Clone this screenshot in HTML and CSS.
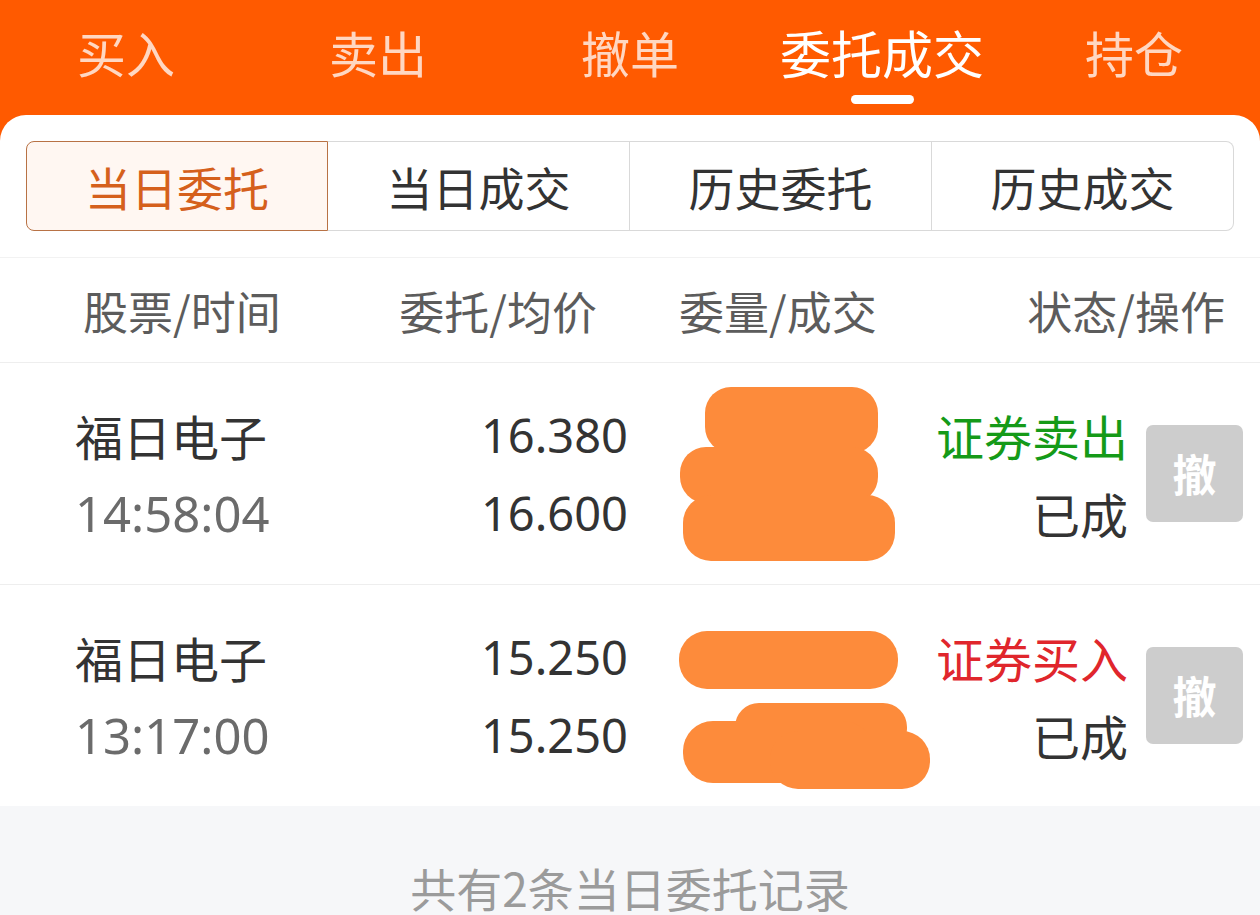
FILE: index.html
```html
<!DOCTYPE html>
<html lang="zh-CN">
<head>
    <meta charset="UTF-8">
    <meta name="viewport" content="width=device-width, initial-scale=1.0">
    <title>委托成交</title>
    <link rel="stylesheet" href="styles.css">
</head>
<body>
    <header class="topbar">
        <nav class="nav">
            <span class="nav-item">买入</span>
            <span class="nav-item">卖出</span>
            <span class="nav-item">撤单</span>
            <span class="nav-item active">委托成交</span>
            <span class="nav-item">持仓</span>
        </nav>
    </header>
    <main class="card">
        <div class="segs">
            <span class="seg on">当日委托</span>
            <span class="seg">当日成交</span>
            <span class="seg">历史委托</span>
            <span class="seg">历史成交</span>
        </div>
        <div class="thead">
            <span class="th c1">股票/时间</span>
            <span class="th c2">委托/均价</span>
            <span class="th c3">委量/成交</span>
            <span class="th c4">状态/操作</span>
        </div>

        <div class="row">
            <div class="cell name">
                <span class="big">福日电子</span>
                <span class="big gray">14:58:04</span>
            </div>
            <div class="cell price">
                <span class="big">16.380</span>
                <span class="big">16.600</span>
            </div>
            <div class="cell qty">
                <!-- 涂抹遮挡 -->
                <svg class="smear" width="260" height="222" viewBox="640 362 260 222">
                    <rect x="705" y="386" width="173" height="66" rx="26" fill="#fd8b3b"/>
                    <rect x="680" y="446" width="198" height="56" rx="26" fill="#fd8b3b"/>
                    <rect x="683" y="494" width="212" height="66" rx="28" fill="#fd8b3b"/>
                </svg>
            </div>
            <div class="cell status">
                <span class="big green">证券卖出</span>
                <span class="big">已成</span>
            </div>
            <div class="cell op"><span class="btn">撤</span></div>
        </div>

        <div class="row">
            <div class="cell name">
                <span class="big">福日电子</span>
                <span class="big gray">13:17:00</span>
            </div>
            <div class="cell price">
                <span class="big">15.250</span>
                <span class="big">15.250</span>
            </div>
            <div class="cell qty">
                <svg class="smear" width="300" height="221" viewBox="640 584 300 221">
                    <rect x="679" y="630" width="219" height="58" rx="28" fill="#fd8b3b"/>
                    <rect x="735" y="702" width="172" height="50" rx="24" fill="#fd8b3b"/>
                    <rect x="683" y="720" width="190" height="62" rx="30" fill="#fd8b3b"/>
                    <rect x="770" y="730" width="160" height="58" rx="28" fill="#fd8b3b"/>
                </svg>
            </div>
            <div class="cell status">
                <span class="big red">证券买入</span>
                <span class="big">已成</span>
            </div>
            <div class="cell op"><span class="btn">撤</span></div>
        </div>

        <footer class="foot">共有2条当日委托记录</footer>
    </main>
</body>
</html>
```

FILE: styles.css
```css
body {
    margin: 0;
    background: #ff5a00;
    font-family: "Noto Sans CJK SC", "Noto Sans", sans-serif;
    overflow: hidden;
    height: 915px;
}
.topbar {
    height: 115px;
}
.nav {
    display: grid;
    grid-template-columns: repeat(5, 1fr);
    height: 115px;
}
.nav-item {
    position: relative;
    text-align: center;
    color: #ffd7c2;
    font-size: 49px;
    line-height: 104px;
}
.nav-item.active {
    color: #fff;
    font-size: 51px;
}
.nav-item.active::after {/*下划线*/
    content: "";
    position: absolute;
    left: 50%;
    bottom: 11px;
    width: 63px;
    height: 9px;
    margin-left: -31px;
    background: #fff;
    border-radius: 5px;
}
.card {
    background: #fff;
    border-radius: 26px 26px 0 0;
    height: 800px;
}
.segs {
    display: grid;
    grid-template-columns: repeat(4, 1fr);
    margin: 0 26px;
    padding-top: 26px;
}
.seg {
    height: 88px;
    line-height: 88px;
    text-align: center;
    font-size: 46px;
    color: #333;
    border: 1px solid #d9d9d9;
    border-left: none;
}
.seg:last-child {
    border-radius: 0 8px 8px 0;
}
.seg.on {
    color: #d5601c;
    background: #fff7f2;
    border: 1px solid #b87245;
    border-radius: 8px 0 0 8px;
}
.thead {
    display: grid;
    grid-template-columns: 340px 300px 260px 1fr;
    height: 104px;
    align-items: center;
    margin-top: 26px;
    border-top: 1px solid #f2f2f2;
    border-bottom: 1px solid #eee;
    color: #5c5c5c;
    font-size: 45px;
}
.c1 { padding-left: 83px; }
.c2 { text-align: right; padding-right: 43px; }
.c3 { padding-left: 39px; }
.c4 { text-align: right; padding-right: 35px; }
.row {
    display: grid;
    grid-template-columns: 340px 300px 260px 228px 1fr;
    height: 221px;
    border-bottom: 1px solid #eee;
}
.row:last-of-type {
    border-bottom: none;
}
.cell {
    display: flex;
    flex-direction: column;
    justify-content: center;
    gap: 14px;
}
.big {
    font-size: 48px;
    line-height: 64px;
    color: #333;
}
.gray {
    color: #6b6b6b;
}
.name {
    padding-left: 75px;
}
.price {
    align-items: flex-end;
    padding-right: 12px;
}
.price .big {
    font-family: "Noto Sans", sans-serif;
    font-size: 47px;
}
.name .gray {
    font-family: "Noto Sans", sans-serif;
    font-size: 49px;
}
.qty {
    position: relative;
}
.smear {
    position: absolute;
    left: 0;
    top: 0;
}
.status {
    align-items: flex-end;
}
.green {
    color: #159a18;
}
.red {
    color: #e0262c;
}
.op {
    padding-left: 18px;
}
.btn {
    width: 97px;
    height: 97px;
    line-height: 97px;
    text-align: center;
    background: #cdcdcd;
    color: #fff;
    font-size: 44px;
    font-weight: bold;
    border-radius: 7px;
}
.foot {
    background: #f6f7f9;
    height: 58px;
    padding-top: 52px;
    text-align: center;
    color: #9b9b9b;
    font-size: 46px;
    line-height: 58px;
}
```
